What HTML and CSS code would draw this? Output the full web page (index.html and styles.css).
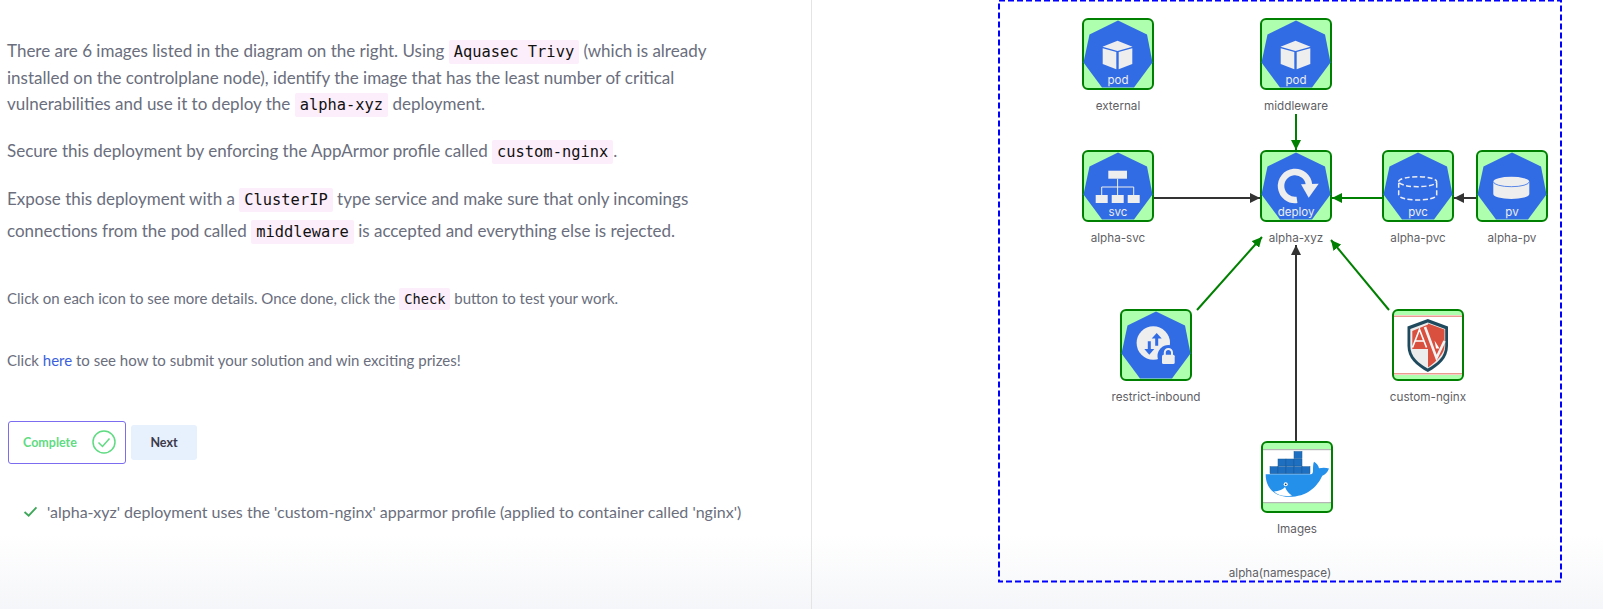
FILE: index.html
```html
<!DOCTYPE html>
<html lang="en">

<head>
    <meta charset="utf-8">
    <title>alpha-xyz task</title>
    <link rel="stylesheet" href="styles.css">
</head>

<body>
    <div class="page">
        <section class="task">
            <p class="intro">There are 6 images listed in the diagram on the right. Using <code>Aquasec Trivy</code> (which is already installed on the controlplane node), identify the image that has the least number of critical vulnerabilities and use it to deploy the <code>alpha-xyz</code> deployment.</p>
            <p class="secure">Secure this deployment by enforcing the AppArmor profile called <code>custom-nginx</code>.</p>
            <p class="expose">Expose this deployment with a <code>ClusterIP</code> type service and make sure that only incomings connections from the pod called <code>middleware</code> is accepted and everything else is rejected.</p>
            <p class="hint">Click on each icon to see more details. Once done, click the <code>Check</code> button to test your work.</p>
            <p class="hint prizes">Click <a href="#">here</a> to see how to submit your solution and win exciting prizes!</p>
            <div class="actions">
                <button class="completeBtn" type="button">Complete
                    <svg class="completeIcon" viewBox="0 0 24 24">
                        <circle cx="12" cy="12" r="11"></circle>
                        <path d="M6.5 12.5l4 4 7-8"></path>
                    </svg>
                </button>
                <button class="nextBtn" type="button">Next</button>
            </div>
            <div class="result">
                <svg class="resultTick" viewBox="0 0 16 12"><path d="M1.5 6.5l4.5 4L14.5 1.5"></path></svg>
                <span>'alpha-xyz' deployment uses the 'custom-nginx' apparmor profile (applied to container called 'nginx')</span>
            </div>
        </section>

        <section class="diagramPane">
            <svg class="diagram" viewBox="812 0 791 609">
                <defs>
                    <g id="box"><rect class="nodeBox" x="1" y="1" width="70" height="70" rx="5"></rect></g>
                    <polygon id="hept" class="hept" points="36,2.5 65,16.5 70.5,44.5 52,69.5 20,69.5 1.5,44.5 7.5,16.5"></polygon>
                    <g id="cube" class="glyph">
                        <polygon points="20.5,28.7 35.5,22.7 50.5,28.7 35.5,33"></polygon>
                        <polygon points="20.7,30.3 34.3,34 34.3,51.3 20.7,46"></polygon>
                        <polygon points="36.7,34 50.3,30.3 50.3,46 36.7,51.3"></polygon>
                    </g>
                    <marker id="headGreen" viewBox="0 0 10 10" refX="10" refY="5" markerWidth="10" markerHeight="10" markerUnits="userSpaceOnUse" orient="auto">
                        <path class="headGreen" d="M0 0L10 5L0 10z"></path>
                    </marker>
                    <marker id="headDark" viewBox="0 0 10 10" refX="10" refY="5" markerWidth="10" markerHeight="10" markerUnits="userSpaceOnUse" orient="auto">
                        <path class="headDark" d="M0 0L10 5L0 10z"></path>
                    </marker>
                </defs>

                <rect class="namespace" x="999" y="0.5" width="562" height="581"></rect>
                <text class="nodeLabel" x="1280" y="577">alpha(namespace)</text>

                <!-- edges -->
                <line class="edgeGreen" x1="1296" y1="114" x2="1296" y2="150" marker-end="url(#headGreen)"></line>
                <line class="edgeDark" x1="1154" y1="198" x2="1260" y2="198" marker-end="url(#headDark)"></line>
                <line class="edgeGreen" x1="1382" y1="198" x2="1332" y2="198" marker-end="url(#headGreen)"></line>
                <line class="edgeDark" x1="1476" y1="198" x2="1454" y2="198" marker-end="url(#headDark)"></line>
                <line class="edgeGreen" x1="1197" y1="310" x2="1262" y2="237" marker-end="url(#headGreen)"></line>
                <line class="edgeGreen" x1="1389" y1="310" x2="1331" y2="240" marker-end="url(#headGreen)"></line>
                <line class="edgeDark" x1="1296" y1="441" x2="1296" y2="245" marker-end="url(#headDark)"></line>

                <!-- external -->
                <g transform="translate(1082 18)">
                    <use href="#box"></use><use href="#hept"></use><use href="#cube"></use>
                    <text class="kind" x="36" y="66">pod</text>
                    <text class="nodeLabel" x="36" y="92">external</text>
                </g>

                <!-- middleware -->
                <g transform="translate(1260 18)">
                    <use href="#box"></use><use href="#hept"></use><use href="#cube"></use>
                    <text class="kind" x="36" y="66">pod</text>
                    <text class="nodeLabel" x="36" y="92">middleware</text>
                </g>

                <!-- alpha-svc -->
                <g transform="translate(1082 150)">
                    <use href="#box"></use><use href="#hept"></use>
                    <g class="glyph">
                        <rect x="26.3" y="20.7" width="18.7" height="8"></rect>
                        <rect x="13.7" y="45" width="12" height="8"></rect>
                        <rect x="29.7" y="45" width="12" height="8"></rect>
                        <rect x="45.7" y="45" width="12" height="8"></rect>
                    </g>
                    <path class="glyphLine" d="M35.6 28.7V45M19.7 45V37H51.7V45"></path>
                    <text class="kind" x="36" y="66">svc</text>
                    <text class="nodeLabel" x="36" y="92">alpha-svc</text>
                </g>

                <!-- alpha-xyz -->
                <g transform="translate(1260 150)">
                    <use href="#box"></use><use href="#hept"></use>
                    <path class="ring" d="M37 49.9A14 14 0 1 1 49 35"></path>
                    <polygon class="glyphFill" points="41,34.3 58.7,33.7 48.7,47.7"></polygon>
                    <text class="kind" x="36" y="66">deploy</text>
                    <text class="nodeLabel" x="36" y="92">alpha-xyz</text>
                </g>

                <!-- alpha-pvc -->
                <g transform="translate(1382 150)">
                    <use href="#box"></use><use href="#hept"></use>
                    <path class="dashCyl" d="M16.7 31.7A19 5 0 0 1 54.7 31.7A19 5 0 0 1 16.7 31.7V45A19 5 0 0 0 54.7 45V31.7"></path>
                    <text class="kind" x="36" y="66">pvc</text>
                    <text class="nodeLabel" x="36" y="92">alpha-pvc</text>
                </g>

                <!-- alpha-pv -->
                <g transform="translate(1476 150)">
                    <use href="#box"></use><use href="#hept"></use>
                    <path class="glyphFill" d="M17.3 31.7A18 5 0 0 1 53.3 31.7V44A18 5 0 0 1 17.3 44z"></path>
                    <path class="pvRim" d="M17.3 31.7A18 5 0 0 0 53.3 31.7"></path>
                    <text class="kind" x="36" y="66">pv</text>
                    <text class="nodeLabel" x="36" y="92">alpha-pv</text>
                </g>

                <!-- restrict-inbound -->
                <g transform="translate(1120 309)">
                    <use href="#box"></use><use href="#hept"></use>
                    <circle class="glyphFill" cx="33.3" cy="34" r="16.7"></circle>
                    <path class="hept" d="M35.2 36.7V29.5H31.7L36.7 24L41.7 29.5H38.2V36.7zM27.8 32.3H30.8V40H34.3L29.3 45.7L24.3 40H27.8z"></path>
                    <circle class="hept" cx="48.5" cy="47" r="11"></circle>
                    <rect class="glyphFill" x="42" y="45.7" width="12.7" height="9.3" rx="1.5"></rect>
                    <path class="lockArc" d="M44.8 46V43.5A3.6 3.6 0 0 1 52 43.5V46"></path>
                    <text class="nodeLabel" x="36" y="92">restrict-inbound</text>
                </g>

                <!-- custom-nginx -->
                <g transform="translate(1392 309)">
                    <use href="#box"></use>
                    <rect class="picWhite" x="2" y="6" width="68" height="60"></rect>
                    <rect class="picRedLine" x="2" y="6.5" width="68" height="1.5"></rect>
                    <rect class="picRedLine" x="2" y="64" width="68" height="1.5"></rect>
                    <path class="shieldOuter" d="M35.8 10L56 17.5V37C56 49 47 57 35.8 63C24.5 57 15.5 49 15.5 37V17.5z"></path>
                    <path class="shieldInner" d="M35.8 13.5L53.2 20V37C53.2 47.5 45 54.5 35.8 59.5C26.5 54.5 18.3 47.5 18.3 37V20z"></path>
                    <path class="shieldRed" d="M20.3 22L36 15.5L38 40H20.3z"></path>
                    <path class="shieldRed" d="M36 14.5L52.5 20.5V37C52.5 44 45 52 36 58.5z"></path>
                    <path class="shieldStroke" d="M20.5 38.5L27.5 20.5L34.5 38.5M23.5 32H31.5"></path>
                    <path class="shieldStrokeWide" d="M33 18L44.5 49L52.5 32"></path>
                    <path class="picWhite" d="M42.5 31.5L47.5 39.5H44z"></path>
                    <text class="nodeLabel" x="36" y="92">custom-nginx</text>
                </g>

                <!-- Images -->
                <g transform="translate(1261 441)">
                    <use href="#box"></use>
                    <rect class="picWhite" x="2" y="8.5" width="68" height="53"></rect>
                    <rect class="picGrayLine" x="2" y="8" width="68" height="1.2"></rect>
                    <rect class="picGrayLine" x="2" y="61" width="68" height="1.2"></rect>
                    <g class="crates">
                        <rect x="9" y="25.7" width="8" height="7"></rect>
                        <rect x="17" y="25.7" width="8" height="7"></rect>
                        <rect x="25" y="25.7" width="8" height="7"></rect>
                        <rect x="33" y="25.7" width="8" height="7"></rect>
                        <rect x="41" y="25.7" width="8" height="7"></rect>
                        <rect x="17" y="18" width="8" height="7"></rect>
                        <rect x="25" y="18" width="8" height="7"></rect>
                        <rect x="33" y="18" width="8" height="7"></rect>
                        <rect x="33" y="10.5" width="8" height="7"></rect>
                    </g>
                    <path class="whale" d="M4.7 33.3H49.7C51.5 33.3 52 32 52 29C52 26 52 23 53 20.7C55.5 22 57.5 24.5 58 27.3C61 26.5 65 26.5 68 27.5C66.5 31.5 64 34 61.3 34.7C56 46 46 55.8 28 55.8C14 55.8 4.5 47 4.7 33.3z"></path>
                    <path class="picWhite" d="M13 50.5C18 50 22 48.5 24 46C25.5 50 28 52.5 31 54.5C24 56 17 54.5 13 50.5z"></path>
                    <circle class="picWhite" cx="24.7" cy="43.3" r="2"></circle>
                    <circle class="whaleEye" cx="24.7" cy="43.3" r="0.9"></circle>
                    <text class="nodeLabel" x="36" y="92">Images</text>
                </g>
            </svg>
        </section>
    </div>
</body>

</html>
```

FILE: styles.css
```css
html, body {
    margin: 0;
    height: 100%;
}

body {
    font-family: "Lato", "Open Sans", sans-serif;
    color: #6a6e7d;
    overflow: hidden;
    background: linear-gradient(to bottom, #fff 0, #fff 535px, #f5f6f9 609px);
}

.page {
    display: flex;
    height: 609px;
}

.task {
    box-sizing: border-box;
    width: 812px;
    padding: 38px 0 0 7px;
    border-right: 1px solid #e4e4e4;
}

p {
    margin: 0;
}

code {
    display: inline-block;
    padding: 0 5px;
    font-family: "DejaVu Sans Mono", monospace;
    font-size: 15.4px;
    line-height: 24px;
    color: #111;
    background-color: #fdeefb;
    border-radius: 2px;
}

.intro, .secure, .expose {
    width: 715px;
    font-size: 17px;
}

.intro {
    line-height: 26.6px;
}

.secure {
    margin-top: 19px;
    line-height: 27px;
}

.expose {
    margin-top: 19px;
    line-height: 32px;
}

.hint {
    margin-top: 40px;
    font-size: 15px;
    line-height: 22px;
}

.hint code {
    font-size: 13.7px;
    line-height: 22px;
}

.prizes {
    margin-top: 39px;
}

a {
    color: #3b5fdc;
    text-decoration: none;
}

.actions {
    display: flex;
    align-items: center;
    gap: 5px;
    margin-top: 50px;
    margin-left: 1px;
}

button {
    font-family: inherit;
    font-size: 12.5px;
    font-weight: 700;
    border-radius: 3px;
}

.completeBtn {
    display: flex;
    align-items: center;
    justify-content: space-between;
    box-sizing: border-box;
    width: 118px;
    height: 43px;
    padding: 0 9px 0 14px;
    color: #5fdb82;
    background: #fff;
    border: 1px solid #7b6cf0;
}

.completeIcon {
    width: 24px;
    height: 24px;
    fill: none;
    stroke: #5fdb82;
    stroke-width: 1.5;
}

.nextBtn {
    width: 66px;
    height: 35px;
    padding: 0;
    color: #3c3a4a;
    background-color: #e6f1fd;
    border: 0;
}

.result {
    display: flex;
    align-items: center;
    gap: 9px;
    margin-top: 36px;
    margin-left: 16px;
    font-size: 16px;
    line-height: 24px;
}

.resultTick {
    width: 15px;
    height: 11px;
    fill: none;
    stroke: #3fa75a;
    stroke-width: 2;
}

.diagramPane {
    flex: 1;
}

.diagram {
    display: block;
    width: 791px;
    height: 609px;
}

.namespace {
    fill: none;
    stroke: #0000ff;
    stroke-width: 2;
    stroke-dasharray: 6 3;
}

.nodeBox {
    fill: #aeffae;
    stroke: #008000;
    stroke-width: 2;
}

.hept {
    fill: #326ce5;
}

.glyph, .glyphFill {
    fill: #eee;
}

.glyphLine {
    fill: none;
    stroke: #eee;
    stroke-width: 1;
}

.ring {
    fill: none;
    stroke: #eee;
    stroke-width: 6.5;
}

.dashCyl {
    fill: none;
    stroke: #eee;
    stroke-width: 1.5;
    stroke-dasharray: 5 2.5;
}

.pvRim {
    fill: none;
    stroke: #326ce5;
    stroke-width: 0.8;
}

.lockArc {
    fill: none;
    stroke: #eee;
    stroke-width: 2;
}

.kind {
    font-family: "Inter", sans-serif;
    font-size: 11.5px;
    fill: #eee;
    text-anchor: middle;
}

.nodeLabel {
    font-family: "Inter", sans-serif;
    font-size: 11.7px;
    fill: #5f5f66;
    text-anchor: middle;
}

.edgeGreen {
    stroke: #008000;
    stroke-width: 2;
}

.edgeDark {
    stroke: #333;
    stroke-width: 2;
}

.headGreen {
    fill: #008000;
}

.headDark {
    fill: #333;
}

.picWhite {
    fill: #fff;
}

.picRedLine {
    fill: #eb9a90;
}

.picGrayLine {
    fill: #b5b5b5;
}

.shieldOuter {
    fill: #1f4a5e;
}

.shieldInner {
    fill: #ececec;
}

.shieldRed {
    fill: #d9503f;
}

.shieldStroke {
    fill: none;
    stroke: #fff;
    stroke-width: 1.6;
}

.shieldStrokeWide {
    fill: none;
    stroke: #f4f4f4;
    stroke-width: 2.6;
}

.crates {
    fill: #1f6fc0;
    stroke: #175a99;
    stroke-width: 0.5;
}

.whale {
    fill: #2590ea;
}

.whaleEye {
    fill: #1d3d5c;
}
```
